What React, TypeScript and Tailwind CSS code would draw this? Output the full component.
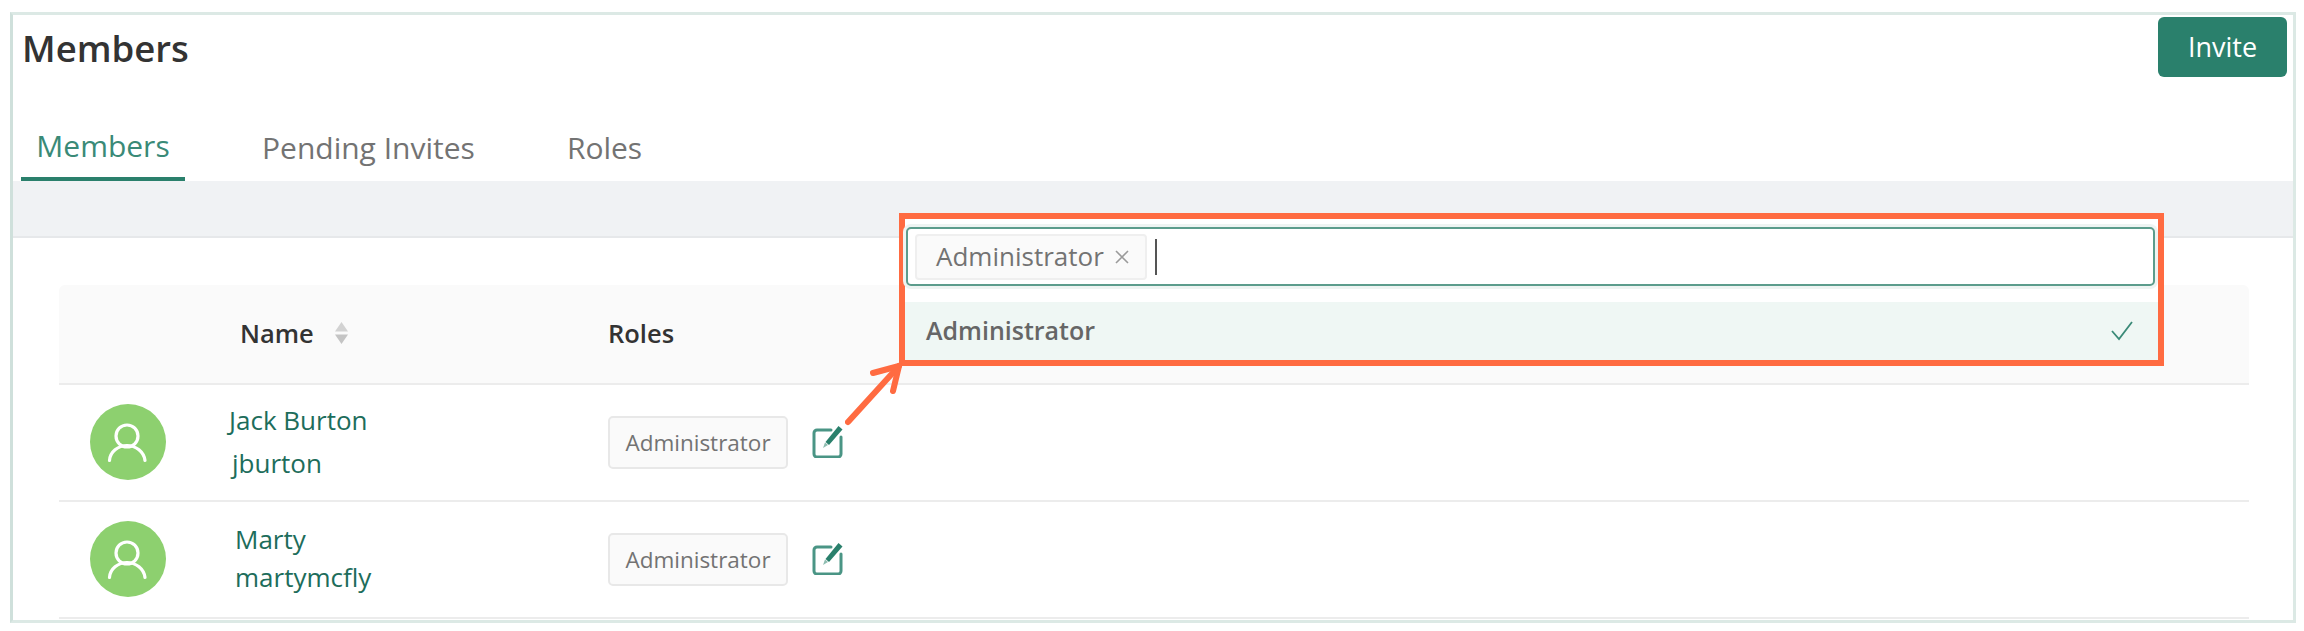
const members = [
  { name: "Jack Burton", login: "jburton", nameClass: "pl-[63px]", loginClass: "pl-[66px]", gap: "gap-[13px]" },
  { name: "Marty", login: "martymcfly", nameClass: "pl-[69px]", loginClass: "pl-[69px]", gap: "gap-[8px]" },
];

function Avatar() {
  return (
    <div className="w-[76px] h-[76px] mb-[2px] rounded-full bg-[#8dd06f] flex items-center justify-center shrink-0">
      <svg width="44" height="46" viewBox="0 0 44 46" fill="none" stroke="#fff" strokeWidth="3.2" strokeLinecap="round">
        <circle cx="21" cy="17" r="11" />
        <path d="M3.5 41.5C4 33 12 26.5 21 26.5s17 6.5 18 15" />
      </svg>
    </div>
  );
}

function EditIcon() {
  return (
    <svg width="31" height="32" viewBox="0 0 31 32" fill="none" className="shrink-0 mb-[1px]">
      <path d="M19 4H5a3 3 0 0 0-3 3v21a3 3 0 0 0 3 3h21a3 3 0 0 0 3-3V11" stroke="#4a9585" strokeWidth="3" strokeLinecap="round" />
      <path d="M26.500 0l4 3.500-13.500 15.500-3.500-3z" fill="#2a806c" />
      <path d="M13 16.500l3 2.500-5 3z" fill="#8fbdb1" />
    </svg>
  );
}

function SortIcon() {
  return (
    <svg width="15" height="24" viewBox="0 0 15 24" className="ml-[20px]">
      <path d="M7.5 1L14 10.5H1z" fill="#d2d2d2" />
      <path d="M7.5 23L1 13.5H14z" fill="#c4c4c4" />
    </svg>
  );
}

function RoleBadge() {
  return (
    <div className="w-[180px] h-[53px] rounded-[5px] border-2 border-[#e8e8e8] bg-[#fafafa] flex items-center justify-center text-[22.5px] text-[#737373]">
      Administrator
    </div>
  );
}

function MemberRow({ member }: { member: (typeof members)[number] }) {
  return (
    <div className="flex items-center h-[117px] border-b-2 border-[#ececec]">
      <div className="w-[549px] flex items-center pl-[31px] shrink-0">
        <Avatar />
        <div className={`flex flex-col pb-[3px] text-[26px] leading-[30px] text-[#1d6d5b] ${member.gap}`}>
          <span className={member.nameClass}>{member.name}</span>
          <span className={member.loginClass}>{member.login}</span>
        </div>
      </div>
      <RoleBadge />
      <div className="ml-[24px] flex items-center">
        <EditIcon />
      </div>
    </div>
  );
}

export default function App() {
  return (
    <div className="w-[2304px] h-[631px] bg-white pt-[12px] pl-[10px] font-['Open_Sans',sans-serif] overflow-hidden">
      <div className="relative w-[2286px] h-[611px] border-[3px] border-[#dce9e5] border-l-[#cfe0db] bg-white">
        {/* Header */}
        <div className="flex justify-between items-start h-[80px] pl-[9px] pr-[6px] pt-[2px]">
          <h1 className="text-[36.5px] leading-[50px] mt-[6px] font-semibold text-[#333]">Members</h1>
          <button className="w-[129px] h-[60px] rounded-[6px] bg-[#2a806c] text-white text-[27px]">Invite</button>
        </div>

        {/* Tabs */}
        <div className="flex h-[86px] pl-[8px] gap-[61px] text-[30px] text-[#737373]">
          <div className="w-[164px] h-[86px] flex items-center justify-center pt-[18px] border-b-4 border-[#2a806c] text-[#3a8a77]">Members</div>
          <div className="flex items-center pt-[18px] pl-[16px]">Pending Invites</div>
          <div className="flex items-center pt-[18px] pl-[31px]">Roles</div>
        </div>

        {/* Grey band */}
        <div className="h-[57px] bg-[#f0f2f4] border-b-2 border-[#e6e8ea]" />

        {/* Table */}
        <div className="ml-[46px] mr-[44px] mt-[47px]">
          <div className="flex items-center h-[100px] pb-[2px] bg-[#fafafa] border-b-2 border-[#ececec] rounded-t-[6px] text-[25.5px] font-semibold text-[#333]">
            <div className="w-[549px] flex items-center pl-[181px] shrink-0">
              Name
              <SortIcon />
            </div>
            <div>Roles</div>
          </div>
          {members.map((member) => (
            <MemberRow key={member.login} member={member} />
          ))}
        </div>

        {/* Callout over the table */}
        <div className="absolute left-[886px] top-[198px] w-[1265px] h-[153px] border-[6px] border-[#ff6b41] bg-white">
          <div className="ml-[1px] mr-[3px] mt-[8px] h-[59px] rounded-[5px] border-2 border-[#5c9c8c] bg-white shadow-[0_0_0_3px_#eef4f2] flex items-center pl-[7px]">
            <div className="w-[232px] h-[46px] rounded-[4px] border-2 border-[#efefef] bg-[#fafafa] flex items-center pl-[19px] text-[26px] text-[#737373]">
              Administrator
              <svg width="14" height="14" viewBox="0 0 14 14" className="ml-[11px]" stroke="#9a9a9a" strokeWidth="1.6" fill="none">
                <path d="M1 1l12 12M13 1L1 13" />
              </svg>
            </div>
            <div className="ml-[8px] w-[2px] h-[36px] bg-[#555]" />
          </div>
          <div className="mt-[9px] h-[7px]" />
          <div className="h-[58px] bg-[#eff7f4] flex items-center justify-between pl-[21px] pr-[25px] text-[25px] font-semibold text-[#666]">
            Administrator
            <svg width="22" height="20" viewBox="0 0 22 20" fill="none" stroke="#3a8a77" strokeWidth="1.8">
              <path d="M1 10l7 8L21 1" />
            </svg>
          </div>
        </div>

        {/* Arrow */}
        <svg width="70" height="70" viewBox="0 0 70 70" fill="none" className="absolute left-[832px] top-[347px]" stroke="#ff6b41" strokeWidth="6" strokeLinecap="round" strokeLinejoin="round">
          <path d="M3 60L54 4" />
          <path d="M28 11L54 4L48 29" />
        </svg>
      </div>
    </div>
  );
}
